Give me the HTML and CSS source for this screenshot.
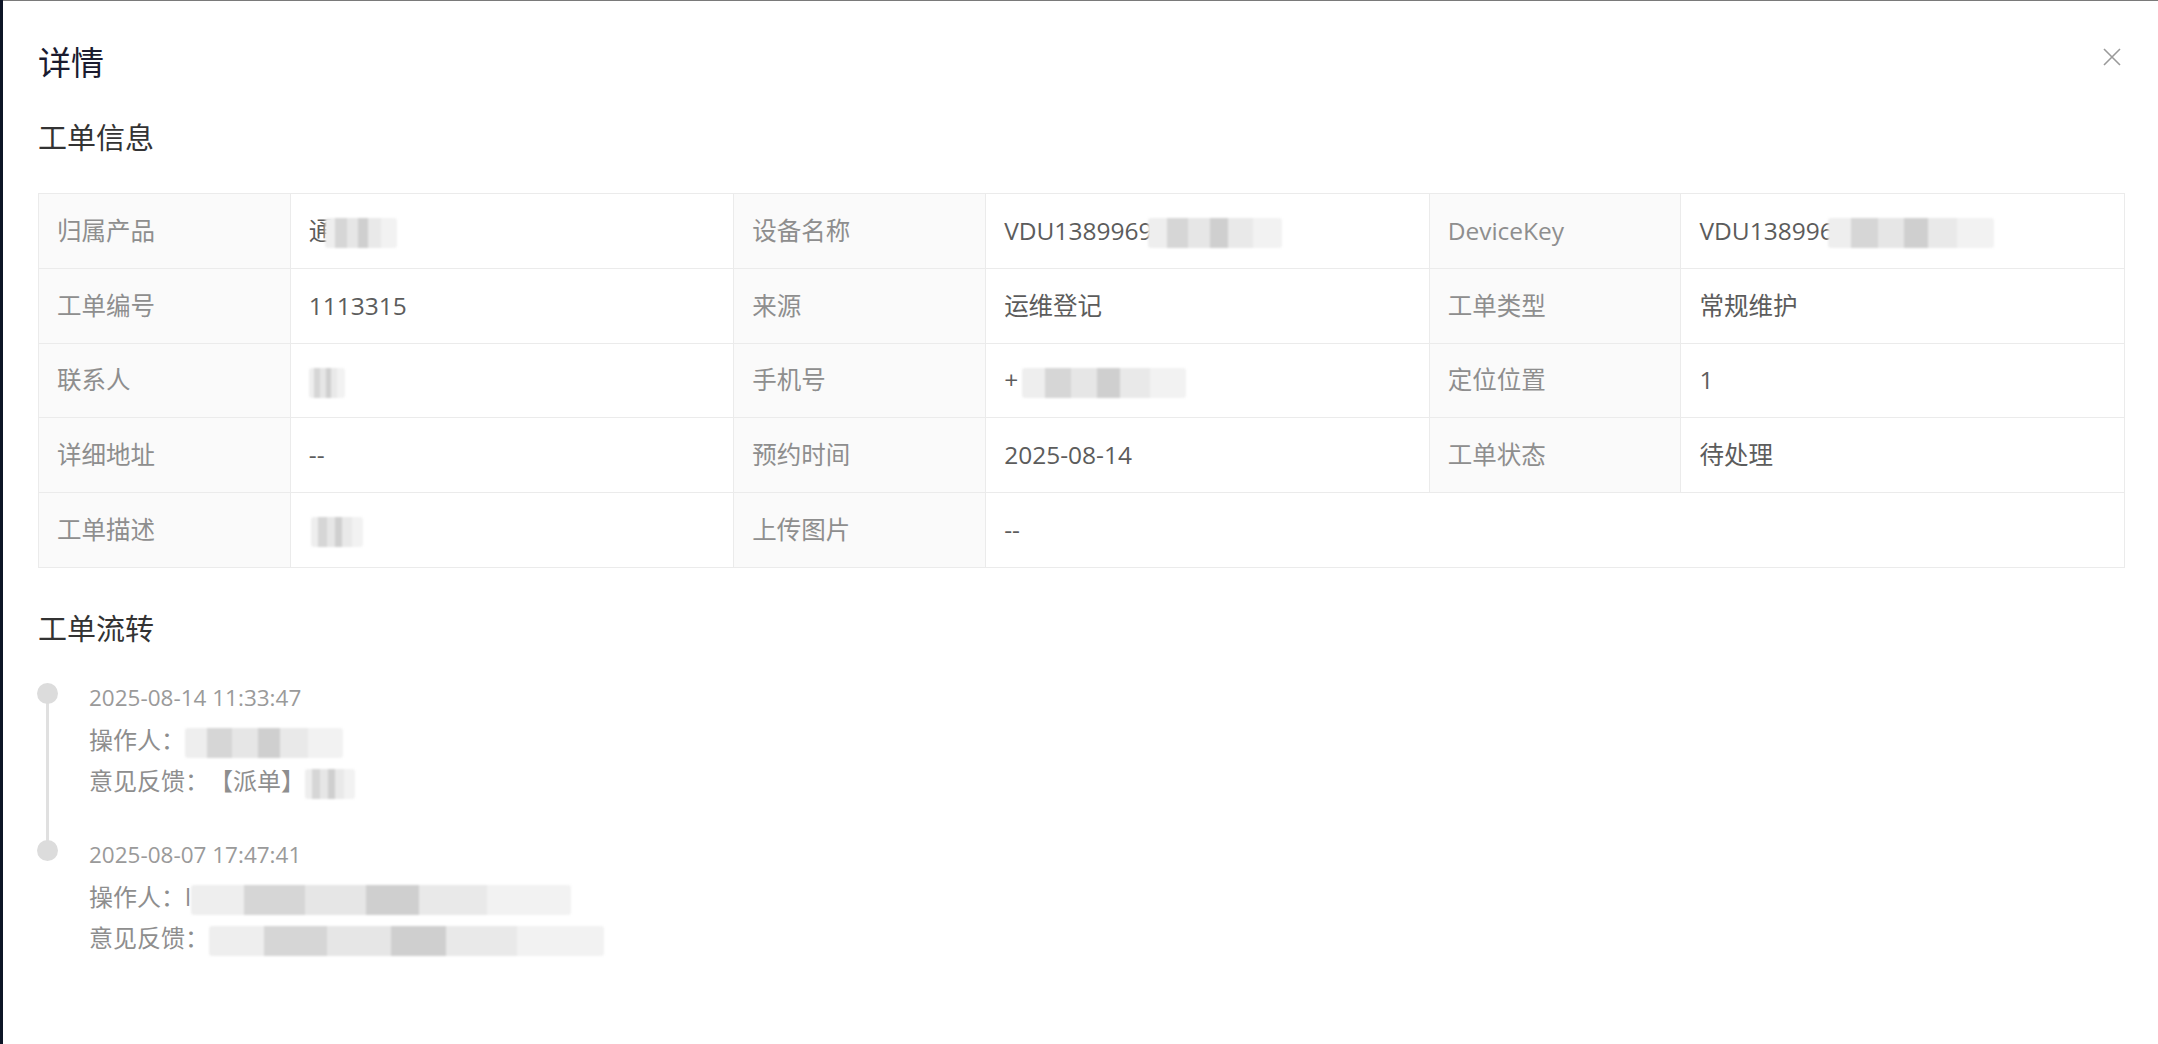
FILE: index.html
```html
<!DOCTYPE html>
<html lang="zh-CN">
<head>
<meta charset="utf-8">
<title>详情</title>
<link rel="stylesheet" href="styles.css">
</head>
<body>
<div class="modal">
  <header class="modal-header">
    <h1 class="modal-title">详情</h1>
    <button class="close-btn" aria-label="关闭">
      <svg width="18" height="18" viewBox="0 0 18 18"><path d="M1 1L17 17M17 1L1 17" stroke="#9a9a9a" stroke-width="1.6" fill="none"/></svg>
    </button>
  </header>

  <h2 class="section-title first">工单信息</h2>
  <table class="desc">
    <colgroup>
      <col class="c-label"><col class="c-value"><col class="c-label"><col class="c-value"><col class="c-label"><col class="c-value">
    </colgroup>
    <tbody>
      <tr>
        <th>归属产品</th>
        <td>通<span class="blur b-prod"></span></td>
        <th>设备名称</th>
        <td>VDU1389969<span class="blur b-dev"></span></td>
        <th>DeviceKey</th>
        <td>VDU138996<span class="blur b-key"></span></td>
      </tr>
      <tr>
        <th>工单编号</th>
        <td>1113315</td>
        <th>来源</th>
        <td>运维登记</td>
        <th>工单类型</th>
        <td>常规维护</td>
      </tr>
      <tr>
        <th>联系人</th>
        <td><span class="blur b-contact"></span></td>
        <th>手机号</th>
        <td>+<span class="blur b-phone"></span></td>
        <th>定位位置</th>
        <td>1</td>
      </tr>
      <tr>
        <th>详细地址</th>
        <td>--</td>
        <th>预约时间</th>
        <td>2025-08-14</td>
        <th>工单状态</th>
        <td>待处理</td>
      </tr>
      <tr>
        <th>工单描述</th>
        <td><span class="blur b-desc"></span></td>
        <th>上传图片</th>
        <td colspan="3">--</td>
      </tr>
    </tbody>
  </table>

  <h2 class="section-title second">工单流转</h2>
  <ul class="timeline">
    <li class="tl-item">
      <span class="tl-tail"></span>
      <span class="tl-dot"></span>
      <div class="tl-date">2025-08-14 11:33:47</div>
      <div class="tl-line">操作人：<span class="blur b-op1"></span></div>
      <div class="tl-line">意见反馈：【派单】<span class="blur b-fb1"></span></div>
    </li>
    <li class="tl-item last">
      <span class="tl-dot"></span>
      <div class="tl-date">2025-08-07 17:47:41</div>
      <div class="tl-line">操作人：l<span class="blur b-op2"></span></div>
      <div class="tl-line">意见反馈：<span class="blur b-fb2"></span></div>
    </li>
  </ul>
</div>
</body>
</html>
```

FILE: styles.css
```css
html, body {
  margin: 0;
  padding: 0;
  height: 100%;
}

body {
  background: #0d1526;
  font-family: "Open Sans", "Noto Sans CJK SC", sans-serif;
  text-spacing-trim: space-all;
  overflow: hidden;
}

.modal {
  margin-left: 3px;
  height: 100%;
  box-sizing: border-box;
  background: #ffffff;
  border-top: 1px solid #7a7a7a;
  padding: 0 33px 0 35px;
}

.modal-header {
  display: flex;
  justify-content: space-between;
  align-items: flex-start;
  padding-top: 38px;
}

.modal-title {
  margin: 0;
  font-family: "Noto Sans CJK SC", sans-serif;
  font-weight: 400;
  font-size: 33px;
  line-height: 44px;
  color: #1b1b2f;
}

.close-btn {
  margin: 9px 4px 0 0;
  padding: 0;
  border: 0;
  background: transparent;
  width: 18px;
  height: 18px;
  display: flex;
}

.section-title {
  margin: 0;
  font-family: "Noto Sans CJK SC", sans-serif;
  font-weight: 400;
  font-size: 29px;
  line-height: 40px;
  color: #333333;
}

.section-title.first {
  margin-top: 33px;
  margin-bottom: 37px;
}

.section-title.second {
  margin-top: 39px;
  margin-bottom: 34px;
}

.desc {
  width: 100%;
  table-layout: fixed;
  border-collapse: collapse;
  border: 1px solid #ebebeb;
  font-size: 24.5px;
}

.c-label { width: 12.07%; }
.c-value { width: 21.26%; }

.desc th,
.desc td {
  height: 74.8px;
  box-sizing: border-box;
  padding: 0 18px;
  border: 1px solid #ebebeb;
  text-align: left;
  font-weight: 400;
  line-height: 34px;
  white-space: nowrap;
  overflow: hidden;
}

.desc th {
  background: #fafafa;
  color: #8e8e8e;
}

.desc td {
  color: #5c5c5c;
}

.blur {
  display: inline-block;
  height: 30px;
  vertical-align: middle;
  border-radius: 3px;
  background: linear-gradient(90deg, #eeeeee 0 14%, #d6d6d6 14% 30%, #e6e6e6 30% 46%, #cfcfcf 46% 60%, #e9e9e9 60% 78%, #f2f2f2 78% 100%);
  filter: blur(1.2px);
}

.b-prod { width: 72px; margin-left: -8px; }
.b-dev { width: 134px; margin-left: -4px; }
.b-key { width: 166px; margin-left: -6px; }
.b-contact { width: 36px; }
.b-phone { width: 164px; margin-left: 4px; }
.b-desc { width: 52px; margin-left: 2px; }
.b-op1 { width: 158px; }
.b-fb1 { width: 50px; }
.b-op2 { width: 380px; }
.b-fb2 { width: 395px; }

.timeline {
  list-style: none;
  margin: 0;
  padding: 0;
}

.tl-item {
  position: relative;
  padding: 0 0 37px 51px;
}

.tl-dot {
  position: absolute;
  left: -1px;
  top: 2px;
  width: 21px;
  height: 21px;
  border-radius: 50%;
  background: #dcdcdc;
}

.tl-tail {
  position: absolute;
  left: 8px;
  top: 12px;
  bottom: -4px;
  width: 3px;
  background: #e0e0e0;
}

.tl-date {
  font-size: 22.5px;
  line-height: 34px;
  color: #9a9a9a;
  margin-bottom: 4px;
}

.tl-line {
  font-size: 24px;
  line-height: 41px;
  color: #8e8e8e;
  white-space: nowrap;
}
```
